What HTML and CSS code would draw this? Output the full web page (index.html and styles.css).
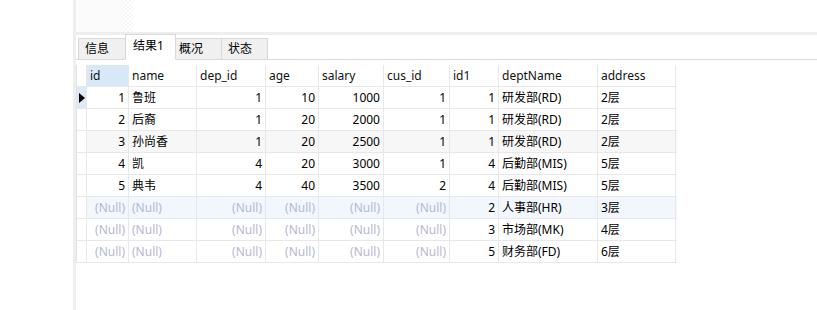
FILE: index.html
```html
<!DOCTYPE html>
<html lang="zh-CN">
<head>
    <meta charset="UTF-8">
    <meta name="viewport" content="width=device-width, initial-scale=1.0">
    <title>结果1</title>
    <link rel="stylesheet" href="styles.css">
</head>
<body>
    <div class="window">
        <div class="side"></div>
        <div class="splitter"></div>
        <div class="main">
            <div class="toolbar">
                <div class="toolbar-left"></div>
                <div class="grip"></div>
            </div>
            <div class="band"></div>
            <div class="tabs">
                <div class="tab tab-info">信息</div>
                <div class="tab tab-result active">结果1</div>
                <div class="tab tab-profile">概况</div>
                <div class="tab tab-status">状态</div>
            </div>
            <div class="grid">
                <div class="row head">
                    <div class="cell c-ind"></div>
                    <div class="cell c-id selected">id</div>
                    <div class="cell c-name">name</div>
                    <div class="cell c-dep">dep_id</div>
                    <div class="cell c-age">age</div>
                    <div class="cell c-salary">salary</div>
                    <div class="cell c-cus">cus_id</div>
                    <div class="cell c-id1">id1</div>
                    <div class="cell c-dept">deptName</div>
                    <div class="cell c-addr">address</div>
                </div>
                <div class="row">
                    <div class="cell c-ind current"><span class="arrow"></span></div>
                    <div class="cell c-id num">1</div>
                    <div class="cell c-name">鲁班</div>
                    <div class="cell c-dep num">1</div>
                    <div class="cell c-age num">10</div>
                    <div class="cell c-salary num">1000</div>
                    <div class="cell c-cus num">1</div>
                    <div class="cell c-id1 num">1</div>
                    <div class="cell c-dept">研发部(RD)</div>
                    <div class="cell c-addr">2层</div>
                </div>
                <div class="row">
                    <div class="cell c-ind"></div>
                    <div class="cell c-id num">2</div>
                    <div class="cell c-name">后裔</div>
                    <div class="cell c-dep num">1</div>
                    <div class="cell c-age num">20</div>
                    <div class="cell c-salary num">2000</div>
                    <div class="cell c-cus num">1</div>
                    <div class="cell c-id1 num">1</div>
                    <div class="cell c-dept">研发部(RD)</div>
                    <div class="cell c-addr">2层</div>
                </div>
                <div class="row alt">
                    <div class="cell c-ind"></div>
                    <div class="cell c-id num">3</div>
                    <div class="cell c-name">孙尚香</div>
                    <div class="cell c-dep num">1</div>
                    <div class="cell c-age num">20</div>
                    <div class="cell c-salary num">2500</div>
                    <div class="cell c-cus num">1</div>
                    <div class="cell c-id1 num">1</div>
                    <div class="cell c-dept">研发部(RD)</div>
                    <div class="cell c-addr">2层</div>
                </div>
                <div class="row">
                    <div class="cell c-ind"></div>
                    <div class="cell c-id num">4</div>
                    <div class="cell c-name">凯</div>
                    <div class="cell c-dep num">4</div>
                    <div class="cell c-age num">20</div>
                    <div class="cell c-salary num">3000</div>
                    <div class="cell c-cus num">1</div>
                    <div class="cell c-id1 num">4</div>
                    <div class="cell c-dept">后勤部(MIS)</div>
                    <div class="cell c-addr">5层</div>
                </div>
                <div class="row">
                    <div class="cell c-ind"></div>
                    <div class="cell c-id num">5</div>
                    <div class="cell c-name">典韦</div>
                    <div class="cell c-dep num">4</div>
                    <div class="cell c-age num">40</div>
                    <div class="cell c-salary num">3500</div>
                    <div class="cell c-cus num">2</div>
                    <div class="cell c-id1 num">4</div>
                    <div class="cell c-dept">后勤部(MIS)</div>
                    <div class="cell c-addr">5层</div>
                </div>
                <div class="row hover">
                    <div class="cell c-ind"></div>
                    <div class="cell c-id num null">(Null)</div>
                    <div class="cell c-name null">(Null)</div>
                    <div class="cell c-dep num null">(Null)</div>
                    <div class="cell c-age num null">(Null)</div>
                    <div class="cell c-salary num null">(Null)</div>
                    <div class="cell c-cus num null">(Null)</div>
                    <div class="cell c-id1 num">2</div>
                    <div class="cell c-dept">人事部(HR)</div>
                    <div class="cell c-addr">3层</div>
                </div>
                <div class="row">
                    <div class="cell c-ind"></div>
                    <div class="cell c-id num null">(Null)</div>
                    <div class="cell c-name null">(Null)</div>
                    <div class="cell c-dep num null">(Null)</div>
                    <div class="cell c-age num null">(Null)</div>
                    <div class="cell c-salary num null">(Null)</div>
                    <div class="cell c-cus num null">(Null)</div>
                    <div class="cell c-id1 num">3</div>
                    <div class="cell c-dept">市场部(MK)</div>
                    <div class="cell c-addr">4层</div>
                </div>
                <div class="row">
                    <div class="cell c-ind"></div>
                    <div class="cell c-id num null">(Null)</div>
                    <div class="cell c-name null">(Null)</div>
                    <div class="cell c-dep num null">(Null)</div>
                    <div class="cell c-age num null">(Null)</div>
                    <div class="cell c-salary num null">(Null)</div>
                    <div class="cell c-cus num null">(Null)</div>
                    <div class="cell c-id1 num">5</div>
                    <div class="cell c-dept">财务部(FD)</div>
                    <div class="cell c-addr">6层</div>
                </div>
            </div>
        </div>
    </div>
</body>
</html>
```

FILE: styles.css
```css
html, body {
    margin: 0;
    padding: 0;
    background-color: #fff;
}
body {
    font-family: "Noto Sans", "Noto Sans CJK SC", sans-serif;
    font-size: 12px;
    color: #000;
}
.window {
    display: flex;
    height: 310px;
    overflow: hidden;
}
.side {
    width: 73px;
    flex-shrink: 0;
}
.splitter {
    width: 3px;
    flex-shrink: 0;
    background-color: #eeeeee;
}
.main {
    flex: 1;
}
.toolbar {
    display: flex;
    height: 32px;
}
.toolbar-left {
    width: 47px;
    background-color: #fbfbfb;
}
.grip {
    width: 10px;
    background-image: repeating-conic-gradient(#f8f8f8 0 25%, #fff 0 50%);
    background-size: 4px 4px;
}
.band {
    height: 3px;
    background-color: #eeeeee;
}
.tabs {
    display: flex;
    align-items: flex-end;
    height: 24px;
    padding-left: 2px;
    border-bottom: 1px solid #d9d9d9;
}
.tab {
    box-sizing: border-box;
    height: 22px;
    line-height: 20px;
    padding-left: 6px;
    margin-right: -1px;
    margin-bottom: -1px;
    background-color: #f0f0f0;
    border: 1px solid #d9d9d9;
    color: #000;
}
.tab-info {
    width: 48px;
}
.tab-result {
    width: 51px;
}
.tab-profile {
    width: 47px;
    padding-left: 3px;
}
.tab-status {
    width: 47px;
}
.tab.active {
    position: relative;
    z-index: 1;
    height: 26px;
    line-height: 22px;
    padding-left: 7px;
    background-color: #fff;
    border-bottom-color: #fff;
}
.grid {
    margin-top: 5px;
    width: 600px;
    border-left: 1px solid #e3e3e3;
}
.row {
    display: flex;
    height: 22px;
    box-sizing: border-box;
    border-bottom: 1px solid #e8e8e8;
}
.row.alt {
    background-color: #f7f7f7;
}
.row.hover {
    background-color: #f1f7fd;
}
.cell {
    box-sizing: border-box;
    height: 21px;
    line-height: 21px;
    padding: 0 3px;
    border-right: 1px solid #e8e8e8;
    white-space: nowrap;
    overflow: hidden;
}
.num {
    text-align: right;
    padding-right: 3px;
}
.null {
    color: #b7b7d0;
}
.head .cell {
    color: #111;
}
.selected {
    background-color: #d9e8f7;
}
.c-ind {
    width: 10px;
    padding: 0;
    background-color: #fff;
}
.c-ind.current {
    background-color: #dde9f6;
}
.arrow {
    display: block;
    width: 0;
    height: 0;
    margin: 6px 0 0 2px;
    border-top: 5px solid transparent;
    border-bottom: 5px solid transparent;
    border-left: 6px solid #000;
}
.c-id {
    width: 42px;
}
.c-name {
    width: 68px;
}
.c-dep {
    width: 69px;
}
.c-age {
    width: 53px;
}
.c-salary {
    width: 65px;
}
.c-cus {
    width: 66px;
}
.c-id1 {
    width: 49px;
}
.c-dept {
    width: 99px;
}
.c-addr {
    width: 78px;
}
```
